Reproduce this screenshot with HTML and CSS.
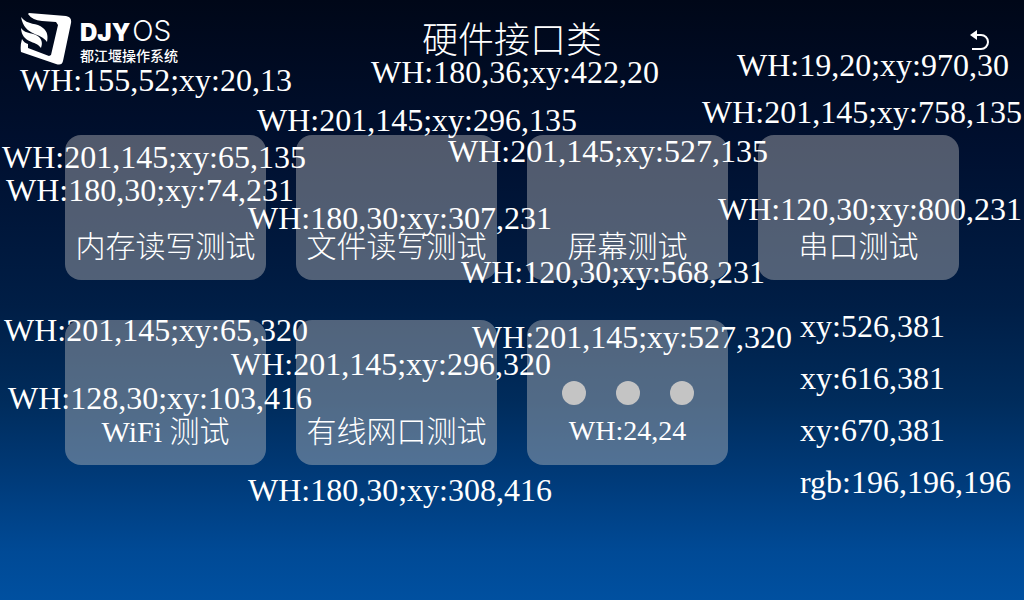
FILE: index.html
```html
<!DOCTYPE html>
<html lang="zh-CN">
<head>
<meta charset="utf-8">
<meta name="viewport" content="width=device-width, initial-scale=1">
<title>硬件接口类</title>
<link rel="stylesheet" href="styles.css">
</head>
<body>
<div class="screen">
  <header class="header">
    <div class="logo">
      <svg class="logo-mark" viewBox="0 0 52 52" aria-hidden="true">
        <path fill="#fff" d="M9 0 L46 3 Q52 4 51 10 L43 48 Q42 53 36 51 L1 39 Q0 33 2 26 Q4 30 8 31 L8 35 L29 43 L31 42 L38 12 L36 9 L22 8 Q12 7 8 1 Z"/>
        <path fill="#fff" d="M1 4 C8 13 17 9 23 15 C28 19 28 24 27 29 C21 19 5 24 1 4 Z M1 15 C6 22 14 19 19 24 C23 28 22 32 21 35 C16 27 2 31 1 15 Z"/>
      </svg>
      <div class="logo-text">
        <div class="logo-name"><span class="logo-bold">DJY</span><span class="logo-light">OS</span></div>
        <div class="logo-sub">都江堰操作系统</div>
      </div>
    </div>
    <h1 class="title">硬件接口类</h1>
    <button class="back" type="button" aria-label="返回">
      <svg class="back-icon" viewBox="0 0 20 20" aria-hidden="true">
        <path fill="#fff" d="M0 5 L7 0 V10 Z"/>
        <path fill="none" stroke="#fff" stroke-width="2" d="M5 5 H11 A7 7 0 0 1 11 19 H2"/>
      </svg>
    </button>
  </header>
  <main class="grid">
    <button class="tile" type="button">内存读写测试</button>
    <button class="tile" type="button">文件读写测试</button>
    <button class="tile" type="button">屏幕测试</button>
    <button class="tile" type="button">串口测试</button>
    <button class="tile" type="button">WiFi 测试</button>
    <button class="tile" type="button">有线网口测试</button>
    <button class="tile more" type="button">
      <span class="dots"><span class="dot"></span><span class="dot"></span><span class="dot"></span></span>
      <span class="more-size">WH:24,24</span>
    </button>
    <ul class="specs">
      <li>xy:526,381</li>
      <li>xy:616,381</li>
      <li>xy:670,381</li>
      <li>rgb:196,196,196</li>
    </ul>
  </main>
  <span class="note note-logo">WH:155,52;xy:20,13</span>
  <span class="note note-title">WH:180,36;xy:422,20</span>
  <span class="note note-back">WH:19,20;xy:970,30</span>
  <span class="note note-file">WH:201,145;xy:296,135</span>
  <span class="note note-serial">WH:201,145;xy:758,135</span>
  <span class="note note-memory">WH:201,145;xy:65,135</span>
  <span class="note note-screen">WH:201,145;xy:527,135</span>
  <span class="note note-memory-label">WH:180,30;xy:74,231</span>
  <span class="note note-file-label">WH:180,30;xy:307,231</span>
  <span class="note note-serial-label">WH:120,30;xy:800,231</span>
  <span class="note note-screen-label">WH:120,30;xy:568,231</span>
  <span class="note note-wifi">WH:201,145;xy:65,320</span>
  <span class="note note-more">WH:201,145;xy:527,320</span>
  <span class="note note-wired">WH:201,145;xy:296,320</span>
  <span class="note note-wifi-label">WH:128,30;xy:103,416</span>
  <span class="note note-wired-label">WH:180,30;xy:308,416</span>
</div>
</body>
</html>
```
FILE: styles.css
```css
* { box-sizing: border-box; }

body {
  margin: 0;
  color: #fff;
  font-family: "Liberation Serif", "Noto Sans CJK SC", serif;
}

.screen {
  position: relative;
  min-height: 100vh;
  overflow: hidden;
  background: linear-gradient(#000718 0%, #001030 25%, #001e46 51%, #002c5c 67%, #003c7c 81%, #004a96 92%, #0050a0 100%);
}

.header {
  display: grid;
  grid-template-columns: minmax(0, 1fr) auto minmax(0, 1fr);
  align-items: start;
  height: 135px;
  padding: 13px 34px 0;
}

.logo { display: flex; gap: 8px; margin-left: -14px; }
.logo-mark { flex: none; width: 52px; height: 52px; }
.logo-text { display: flex; flex-direction: column; padding-top: 4px; }
.logo-name {
  display: flex;
  align-items: baseline;
  gap: 2px;
  font-family: Inter, sans-serif;
  line-height: 28px;
}
.logo-bold { font-size: 24px; font-weight: 900; }
.logo-light { font-size: 28px; font-weight: 300; }
.logo-sub {
  font: 500 14px/16px "Noto Sans CJK SC", sans-serif;
  white-space: nowrap;
}

.title {
  margin: 0;
  padding-top: 6px;
  font: 300 36px/36px "Noto Sans CJK SC", sans-serif;
}

.back {
  justify-self: end;
  margin-top: 17px;
  padding: 0;
  border: 0;
  background: none;
  cursor: pointer;
}
.back-icon { display: block; width: 20px; height: 20px; }

.grid {
  display: grid;
  grid-template-columns: repeat(4, minmax(0, 1fr));
  grid-auto-rows: 145px;
  gap: 40px 30px;
  padding: 0 65px;
}

.tile {
  display: flex;
  align-items: flex-end;
  justify-content: center;
  padding: 0 0 18px;
  border: 0;
  border-radius: 16px;
  background: rgba(196, 196, 196, 0.41);
  color: #fff;
  font: 300 30px/30px "Liberation Serif", "Noto Sans CJK SC", serif;
  white-space: nowrap;
  cursor: pointer;
}

.more {
  flex-direction: column;
  align-items: center;
  justify-content: flex-end;
  gap: 10px;
}
.dots { display: flex; gap: 30px; }
.dot { width: 24px; height: 24px; border-radius: 50%; background: #c4c4c4; }
.more-size { font: 28px/32px "Liberation Serif", serif; }

.specs {
  margin: -20px 0 0;
  padding: 0 0 0 42px;
  list-style: none;
  font-size: 32px;
  line-height: 52px;
  white-space: nowrap;
}

.note {
  position: absolute;
  font-size: 32px;
  line-height: 36px;
  white-space: nowrap;
  pointer-events: none;
}
.note-logo { left: 20px; top: 62px; }
.note-title { left: 371px; top: 54px; }
.note-back { left: 737px; top: 47px; }
.note-file { left: 257px; top: 102px; }
.note-serial { left: 702px; top: 94px; }
.note-memory { left: 2px; top: 139px; }
.note-screen { left: 448px; top: 133px; }
.note-memory-label { left: 6px; top: 172px; }
.note-file-label { left: 248px; top: 200px; }
.note-serial-label { left: 718px; top: 191px; }
.note-screen-label { left: 461px; top: 254px; }
.note-wifi { left: 4px; top: 312px; }
.note-more { left: 472px; top: 319px; }
.note-wired { left: 231px; top: 346px; }
.note-wifi-label { left: 8px; top: 380px; }
.note-wired-label { left: 248px; top: 472px; }
```
